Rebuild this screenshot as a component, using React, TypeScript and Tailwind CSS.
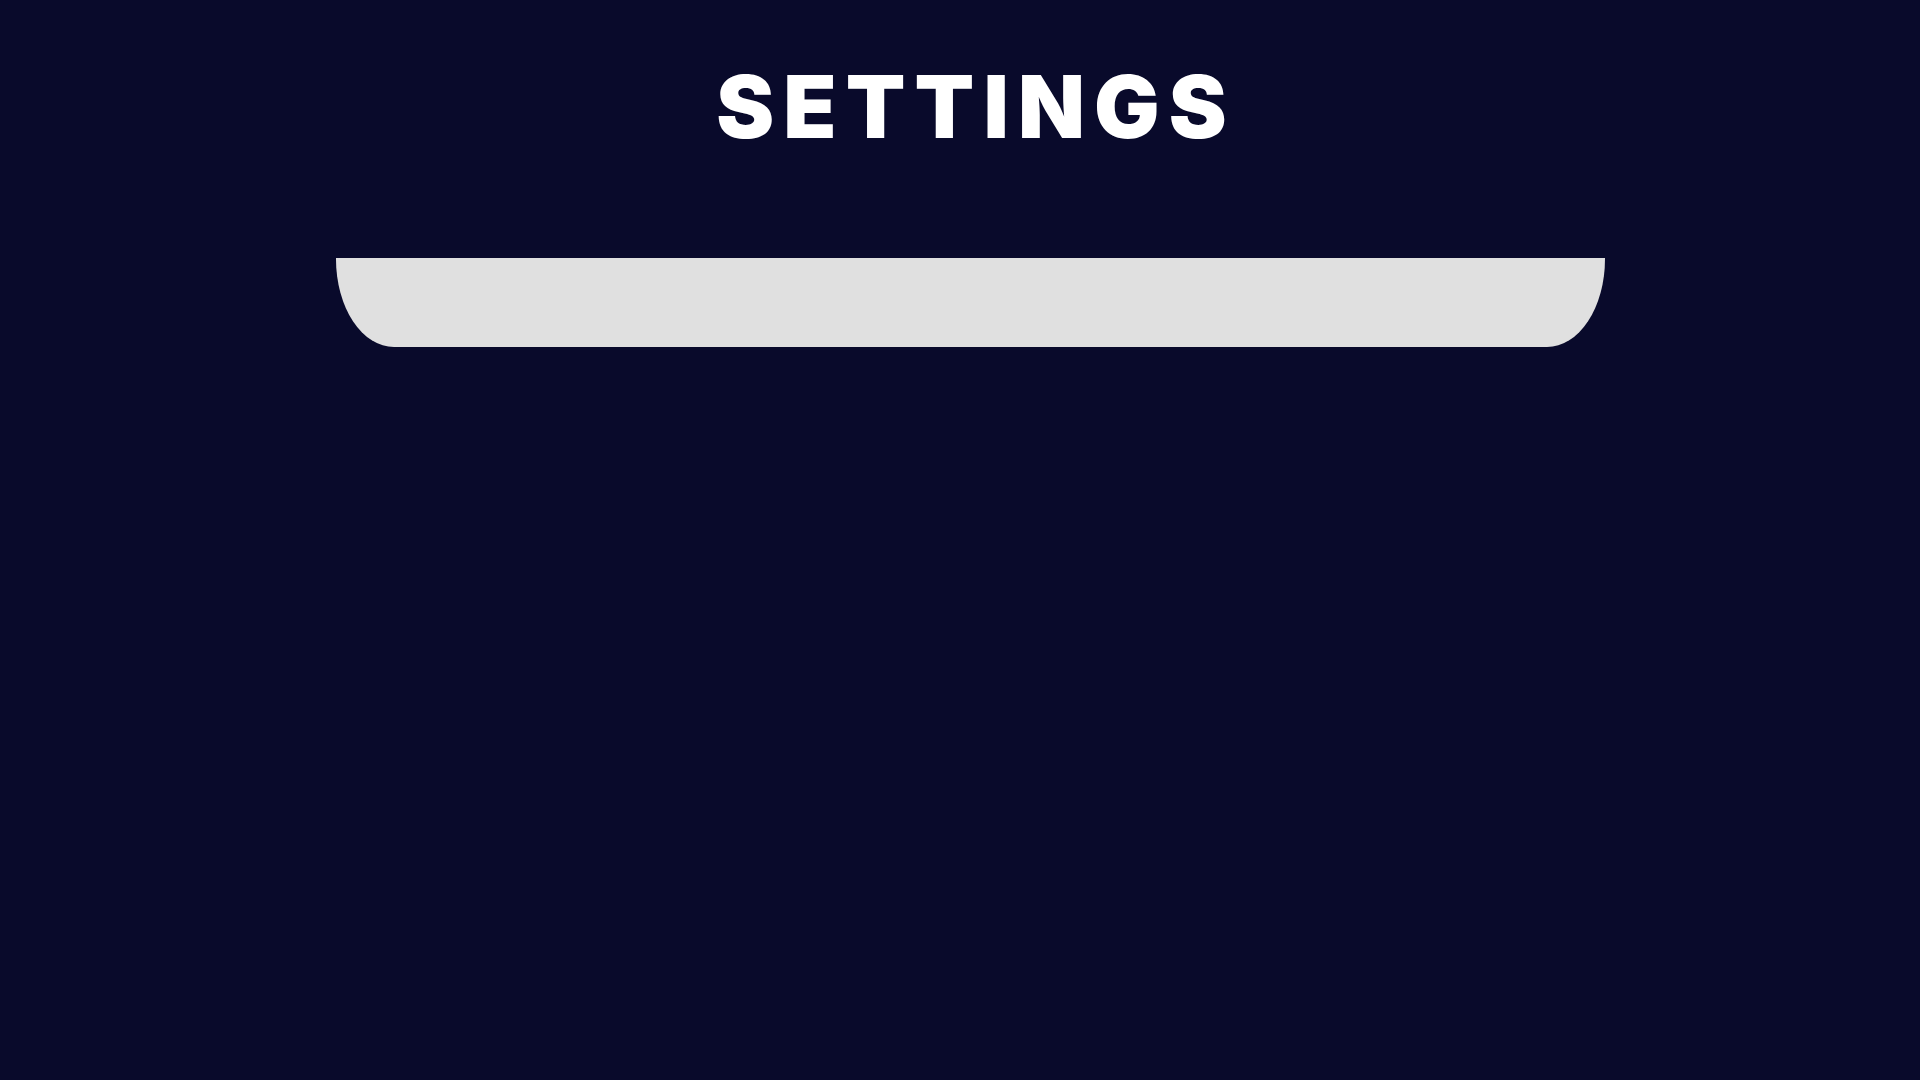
export default function App() {
  return (
    <div className="min-h-screen w-full bg-[#090a2b] flex flex-col items-center" style={{ fontFamily: "Inter, 'Noto Sans', sans-serif" }}>
      <h1 className="mt-[62px] ml-[32px] text-[87px] leading-[90px] font-black text-white tracking-[0.105em] text-center">
        SETTINGS
      </h1>
      <div className="mt-[106px] ml-[21px] w-[1269px] h-[89px] bg-[#e0e0e0] rounded-bl-[58px_88px] rounded-br-[58px_88px]"></div>
    </div>
  );
}
